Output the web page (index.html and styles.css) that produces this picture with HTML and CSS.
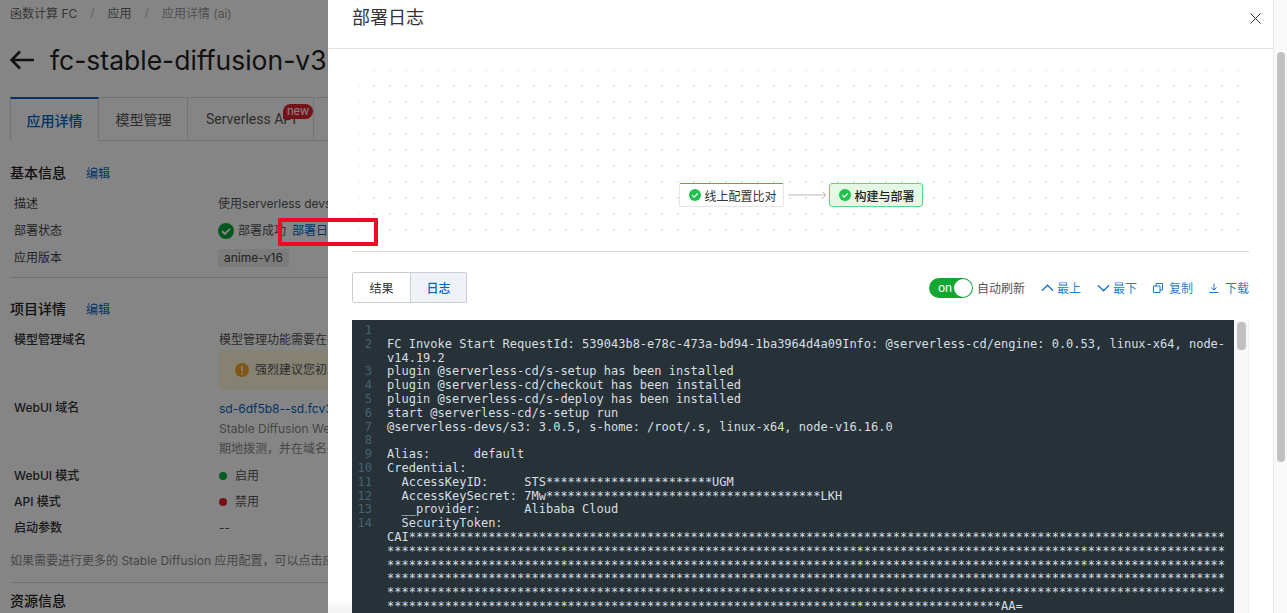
FILE: index.html
```html
<!DOCTYPE html>
<html lang="zh">
<head>
<meta charset="utf-8">
<title>部署日志</title>
<link rel="stylesheet" href="styles.css">
</head>
<body>
<div class="page">
  <div class="crumbs"><span>函数计算 FC</span><i>/</i><span>应用</span><i>/</i><span class="cur">应用详情 (ai)</span></div>
  <div class="title-row">
    <svg class="back" width="24" height="22" viewBox="0 0 24 22"><path d="M24 11H1.500M10 2.500L1.500 11l8.500 8.500" fill="none" stroke="#222" stroke-width="2.600"/></svg>
    <h1>fc-stable-diffusion-v3</h1>
  </div>
  <div class="tabs">
    <div class="tab active">应用详情</div>
    <div class="tab">模型管理</div>
    <div class="tab api">Serverless API<span class="new">new</span></div>
    <div class="tab rest">监控</div>
  </div>
  <div class="sec-head first"><b>基本信息</b><a>编辑</a></div>
  <div class="kv"><span class="k">描述</span><span class="v">使用serverless devs 部署 Stable Diffusion 应用</span></div>
  <div class="kv"><span class="k">部署状态</span><span class="v status">
    <svg width="16" height="16" viewBox="0 0 16 16"><circle cx="8" cy="8" r="8" fill="#0ba83a"/><path d="M4 8.200l2.800 2.800L12 5.800" fill="none" stroke="#fff" stroke-width="1.900"/></svg>
    <span>部署成功</span><a>部署日志</a></span></div>
  <div class="kv"><span class="k">应用版本</span><span class="v"><span class="ver">anime-v16</span></span></div>
  <hr class="rule r1">
  <div class="sec-head"><b>项目详情</b><a>编辑</a></div>
  <div class="kv bold tall"><span class="k">模型管理域名</span><div class="v col">
    <span>模型管理功能需要在初次使用时进行配置</span>
    <div class="warn"><svg width="14" height="14" viewBox="0 0 14 14"><circle cx="7" cy="7" r="7" fill="#f5a623"/><path d="M7 3v5M7 9.600v1.600" stroke="#fff" stroke-width="1.700"/></svg><span>强烈建议您初次使用时完成配置</span></div>
  </div></div>
  <div class="kv bold web"><span class="k">WebUI 域名</span><div class="v col">
    <a>sd-6df5b8--sd.fcv3.example.run</a>
    <span class="muted">Stable Diffusion WebUI 访问域名</span>
    <span class="muted">期地拨测，并在域名失效后重新配置</span>
  </div></div>
  <div class="kv bold m1"><span class="k">WebUI 模式</span><span class="v dot on">启用</span></div>
  <div class="kv bold m2"><span class="k">API 模式</span><span class="v dot off">禁用</span></div>
  <div class="kv bold m2"><span class="k">启动参数</span><span class="v">--</span></div>
  <p class="note">如果需要进行更多的 Stable Diffusion 应用配置，可以点击应用配置</p>
  <hr class="rule r2">
  <div class="sec-head last"><b>资源信息</b></div>
</div>

<div class="mask"></div>

<aside class="drawer">
  <div class="drawer-main">
    <header class="d-head"><h2>部署日志</h2>
      <svg class="close" width="11" height="11" viewBox="0 0 11 11"><path d="M.5.5l10 10M10.500.5l-10 10" stroke="#333" stroke-width="1"/></svg>
    </header>
    <div class="d-body">
      <div class="flow">
        <div class="node done"><svg width="12" height="12" viewBox="0 0 12 12"><circle cx="6" cy="6" r="6" fill="#1fc24a"/><path d="M3.200 6.200l2 2 3.600-3.800" fill="none" stroke="#fff" stroke-width="1.200"/></svg>线上配置比对</div>
        <svg class="edge" width="40" height="8" viewBox="0 0 40 8"><path d="M0 4h38M35 1l3 3-3 3" fill="none" stroke="#b5b9bd" stroke-width="1"/></svg>
        <div class="node cur"><svg width="12" height="12" viewBox="0 0 12 12"><circle cx="6" cy="6" r="6" fill="#1fc24a"/><path d="M3.200 6.200l2 2 3.600-3.800" fill="none" stroke="#fff" stroke-width="1.200"/></svg>构建与部署</div>
      </div>
      <div class="toolbar">
        <div class="seg"><span>结果</span><span class="sel">日志</span></div>
        <div class="tools">
          <span class="switch"><span>on</span><i></i></span><span class="auto">自动刷新</span>
          <a class="t1"><svg width="13" height="8" viewBox="0 0 14 8"><path d="M1 7l6-6 6 6" fill="none" stroke="#1f76c8" stroke-width="1.500"/></svg>最上</a>
          <a class="t2"><svg width="13" height="8" viewBox="0 0 14 8"><path d="M1 1l6 6 6-6" fill="none" stroke="#1f76c8" stroke-width="1.500"/></svg>最下</a>
          <a class="t3"><svg width="10" height="10" viewBox="0 0 10 10"><path d="M.5 3h6.500v6.500h-6.500zM3 3V.5h6.500V7H7" fill="none" stroke="#1f76c8"/></svg>复制</a>
          <a class="t4"><svg width="10" height="10" viewBox="0 0 10 10"><path d="M5 .5v6M2.500 4.500L5 7l2.500-2.500M.5 9.500h9" fill="none" stroke="#1f76c8"/></svg>下载</a>
        </div>
      </div>
      <div class="logwrap">
        <div class="log">
          <div class="ln"><s>1</s><code></code></div>
          <div class="ln"><s>2</s><code>FC Invoke Start RequestId: 539043b8-e78c-473a-bd94-1ba3964d4a09Info: @serverless-cd/engine: 0.0.53, linux-x64, node-v14.19.2</code></div>
          <div class="ln"><s>3</s><code>plugin @serverless-cd/s-setup has been installed</code></div>
          <div class="ln"><s>4</s><code>plugin @serverless-cd/checkout has been installed</code></div>
          <div class="ln"><s>5</s><code>plugin @serverless-cd/s-deploy has been installed</code></div>
          <div class="ln"><s>6</s><code>start @serverless-cd/s-setup run</code></div>
          <div class="ln"><s>7</s><code>@serverless-devs/s3: 3.0.5, s-home: /root/.s, linux-x64, node-v16.16.0</code></div>
          <div class="ln"><s>8</s><code></code></div>
          <div class="ln"><s>9</s><code>Alias:      default</code></div>
          <div class="ln"><s>10</s><code>Credential:</code></div>
          <div class="ln"><s>11</s><code>  AccessKeyID:     STS***********************UGM</code></div>
          <div class="ln"><s>12</s><code>  AccessKeySecret: 7Mw**************************************LKH</code></div>
          <div class="ln"><s>13</s><code>  __provider:      Alibaba Cloud</code></div>
          <div class="ln"><s>14</s><code>  SecurityToken:
CAI*****************************************************************************************************************
********************************************************************************************************************
********************************************************************************************************************
********************************************************************************************************************
********************************************************************************************************************
*************************************************************************************AA=</code></div>
        </div>
        <div class="log-track"><i></i></div>
      </div>
    </div>
  </div>
  <div class="d-track"><i></i></div>
</aside>

<div class="callout"></div>
</body>
</html>
```

FILE: styles.css
```css
* { box-sizing: border-box; }
html, body { margin: 0; height: 613px; overflow: hidden; }
body { background: #fff; font-family: Inter, "Noto Sans CJK SC", sans-serif; color: #333; font-size: 12px; }
a { color: #0064c8; text-decoration: none; }

.page { width: 1287px; height: 613px; overflow: hidden; padding: 0 0 0 10px; white-space: nowrap; }
.crumbs { display: flex; height: 24px; align-items: center; color: #666; gap: 13px; }
.crumbs i { font-style: normal; color: #bbb; }
.crumbs .cur { color: #999; }
.title-row { display: flex; align-items: center; height: 40px; margin-top: 16px; gap: 16px; }
.title-row h1 { margin: 0; font-size: 26.5px; font-weight: 400; color: #222; }
.back { flex: none; }
.tabs { display: flex; height: 44px; margin-top: 17px; width: 1277px; font-family: Roboto, "Noto Sans CJK SC", sans-serif; }
.tab { position: relative; height: 44px; width: 89px; border: 1px solid #ddd; border-left: 0; padding-left: 1px; display: flex; align-items: center; justify-content: center; font-size: 14px; color: #555; }
.tab.active { border-left: 1px solid #ddd; border-top: 2px solid #0064c8; border-bottom: 0; color: #0064c8; font-weight: 500; padding-left: 0; }
.tab.api { width: 126px; }
.tab.rest { width: 89px; }
.new { position: absolute; left: 95px; top: 6px; width: 30px; height: 15px; line-height: 14px; border-radius: 8px 8px 8px 0; background: #e0242f; color: #fff; font-size: 12px; text-align: center; }
.sec-head { display: flex; align-items: center; gap: 20px; height: 20px; font-size: 14px; color: #222; }
.sec-head b { font-weight: 500; }
.sec-head a { font-size: 12px; }
.sec-head.first { margin-top: 21px; }
.kv { display: flex; align-items: flex-start; padding-left: 4px; line-height: 18px; min-height: 18px; color: #333; }
.sec-head + .kv { margin-top: 13px; }
.kv + .kv { margin-top: 9px; }
.k { width: 204px; flex: none; color: #444; }
.v { color: #555; }
.status { display: flex; align-items: center; gap: 4px; }
.status a { margin-left: 2px; }
.ver { display: inline-block; background: #eee; height: 18px; line-height: 18px; padding: 0 6px; color: #444; }
.rule { border: 0; border-top: 1px solid #d8d8d8; margin: 0; width: 1277px; }
.r1 { margin-top: 10px; }
.r1 + .sec-head { margin-top: 20px; }
.bold .k { font-weight: 500; color: #333; width: 205px; }
.col { display: flex; flex-direction: column; }
.warn { display: flex; align-items: center; gap: 6px; height: 40px; width: 900px; margin-top: 1px; padding-left: 16px; background: #fff7dc; color: #555; }
.kv.web { margin-top: 9px; }
.web .col span, .web .col a { line-height: 20px; }
.muted { color: #888; }
.kv.m1 { margin-top: 8px; }
.kv.m2 { margin-top: 8px; }
.dot { display: flex; align-items: center; gap: 8px; }
.dot::before { content: ""; width: 8px; height: 8px; border-radius: 50%; }
.dot.on::before { background: #0bb03a; }
.dot.off::before { background: #e0242f; }
.note { margin: 15px 0 0; line-height: 18px; color: #888; }
.r2 { margin-top: 12px; }
.sec-head.last { margin-top: 7px; }

.mask { position: absolute; inset: 0; background: rgba(0,0,0,.48); }

.drawer { position: absolute; left: 328px; top: 0; width: 959px; height: 613px; background: #fff; display: flex; overflow: hidden; }
.drawer::after { content: ""; position: absolute; left: 0; bottom: 0; width: 24px; height: 14px; background: linear-gradient(#fff, #f1f1f1); }
.drawer-main { flex: 1; min-width: 0; display: flex; flex-direction: column; }
.d-head { height: 49px; flex: none; border-bottom: 1px solid #e3e3e3; padding: 6px 24px 0; display: flex; justify-content: space-between; }
.d-head h2 { margin: 0; font-size: 18px; font-weight: 400; line-height: 24px; color: #333; }
.close { margin: 7px -12px 0 0; }
.d-body { padding: 0 24px; }
.flow { height: 203px; padding: 21px 9px 10px 6px; border-bottom: 1px solid #d9d9d9; display: flex; align-items: flex-end; justify-content: center; background-image: radial-gradient(circle, #e8e8e8 0.9px, transparent 1.1px); background-size: 16px 16px; background-origin: content-box; background-clip: content-box; background-position: -8px -8px; }
.node { display: flex; align-items: center; gap: 4px; height: 24px; margin-bottom: 34px; padding: 0 8px 0 9px; background: #fff; border: 1px solid #e5e5e5; border-top: 1px solid #29c24f; border-radius: 2px; color: #333; white-space: nowrap; }
.node svg { flex: none; }
.node.done { width: 105px; margin-left: 3px; }
.node.cur { width: 94px; background: #e3f9e6; border: 1px solid #5ed679; font-weight: 500; color: #222; border-radius: 3px; }
.edge { margin: 0 1px 42px 4px; flex: none; }
.toolbar { display: flex; justify-content: space-between; align-items: flex-start; margin-top: 20px; height: 32px; }
.seg { display: flex; height: 31px; border: 1px solid #c9ced4; border-radius: 2px; }
.seg span { width: 57px; display: flex; align-items: center; justify-content: center; color: #333; }
.seg .sel { width: 56px; background: #eff3f8; color: #0064c8; border-left: 1px solid #c9ced4; font-weight: 500; }
.tools { display: flex; align-items: center; height: 31px; }
.switch { display: flex; align-items: center; justify-content: space-between; width: 44px; height: 20px; border-radius: 10px; background: #12a733; color: #fff; padding: 0 1px 0 9px; }
.switch i { width: 18px; height: 18px; border-radius: 50%; background: #fff; }
.auto { margin-left: 4px; color: #555; }
.tools a { display: flex; align-items: center; color: #2a7fd0; margin-left: 16px; }
.tools a svg { flex: none; }
.t1, .t2 { gap: 3px; }
.t3, .t4 { gap: 6px; }
.logwrap { display: flex; margin-top: 16px; height: 400px; }
.log { width: 882px; background: #263238; padding-top: 4px; overflow: hidden; font-family: "DejaVu Sans Mono", monospace; font-size: 12px; line-height: 13.8px; color: #d8dfe2; }
.ln { display: flex; min-height: 13.8px; }
.ln s { flex: none; width: 20px; text-align: right; text-decoration: none; color: #47626f; }
.ln code { flex: none; width: 841px; margin-left: 15px; font: inherit; white-space: pre-wrap; overflow-wrap: anywhere; }
.log-track { width: 15px; background: #f8f8f8; border-right: 1px solid #eee; padding: 2px 2px 0 3px; }
.log-track i { display: block; height: 28px; border-radius: 4px; background: #c1c1c1; }
.d-track { width: 14px; flex: none; border-left: 1px solid #e8e8e8; background: #fafafa; padding: 52px 2px 0 3px; }
.d-track i { display: block; height: 410px; border-radius: 4px; background: #c1c1c1; }

.callout { position: absolute; left: 278px; top: 218px; width: 100px; height: 28px; border: 4px solid #ee0a24; border-radius: 1px; }
```
